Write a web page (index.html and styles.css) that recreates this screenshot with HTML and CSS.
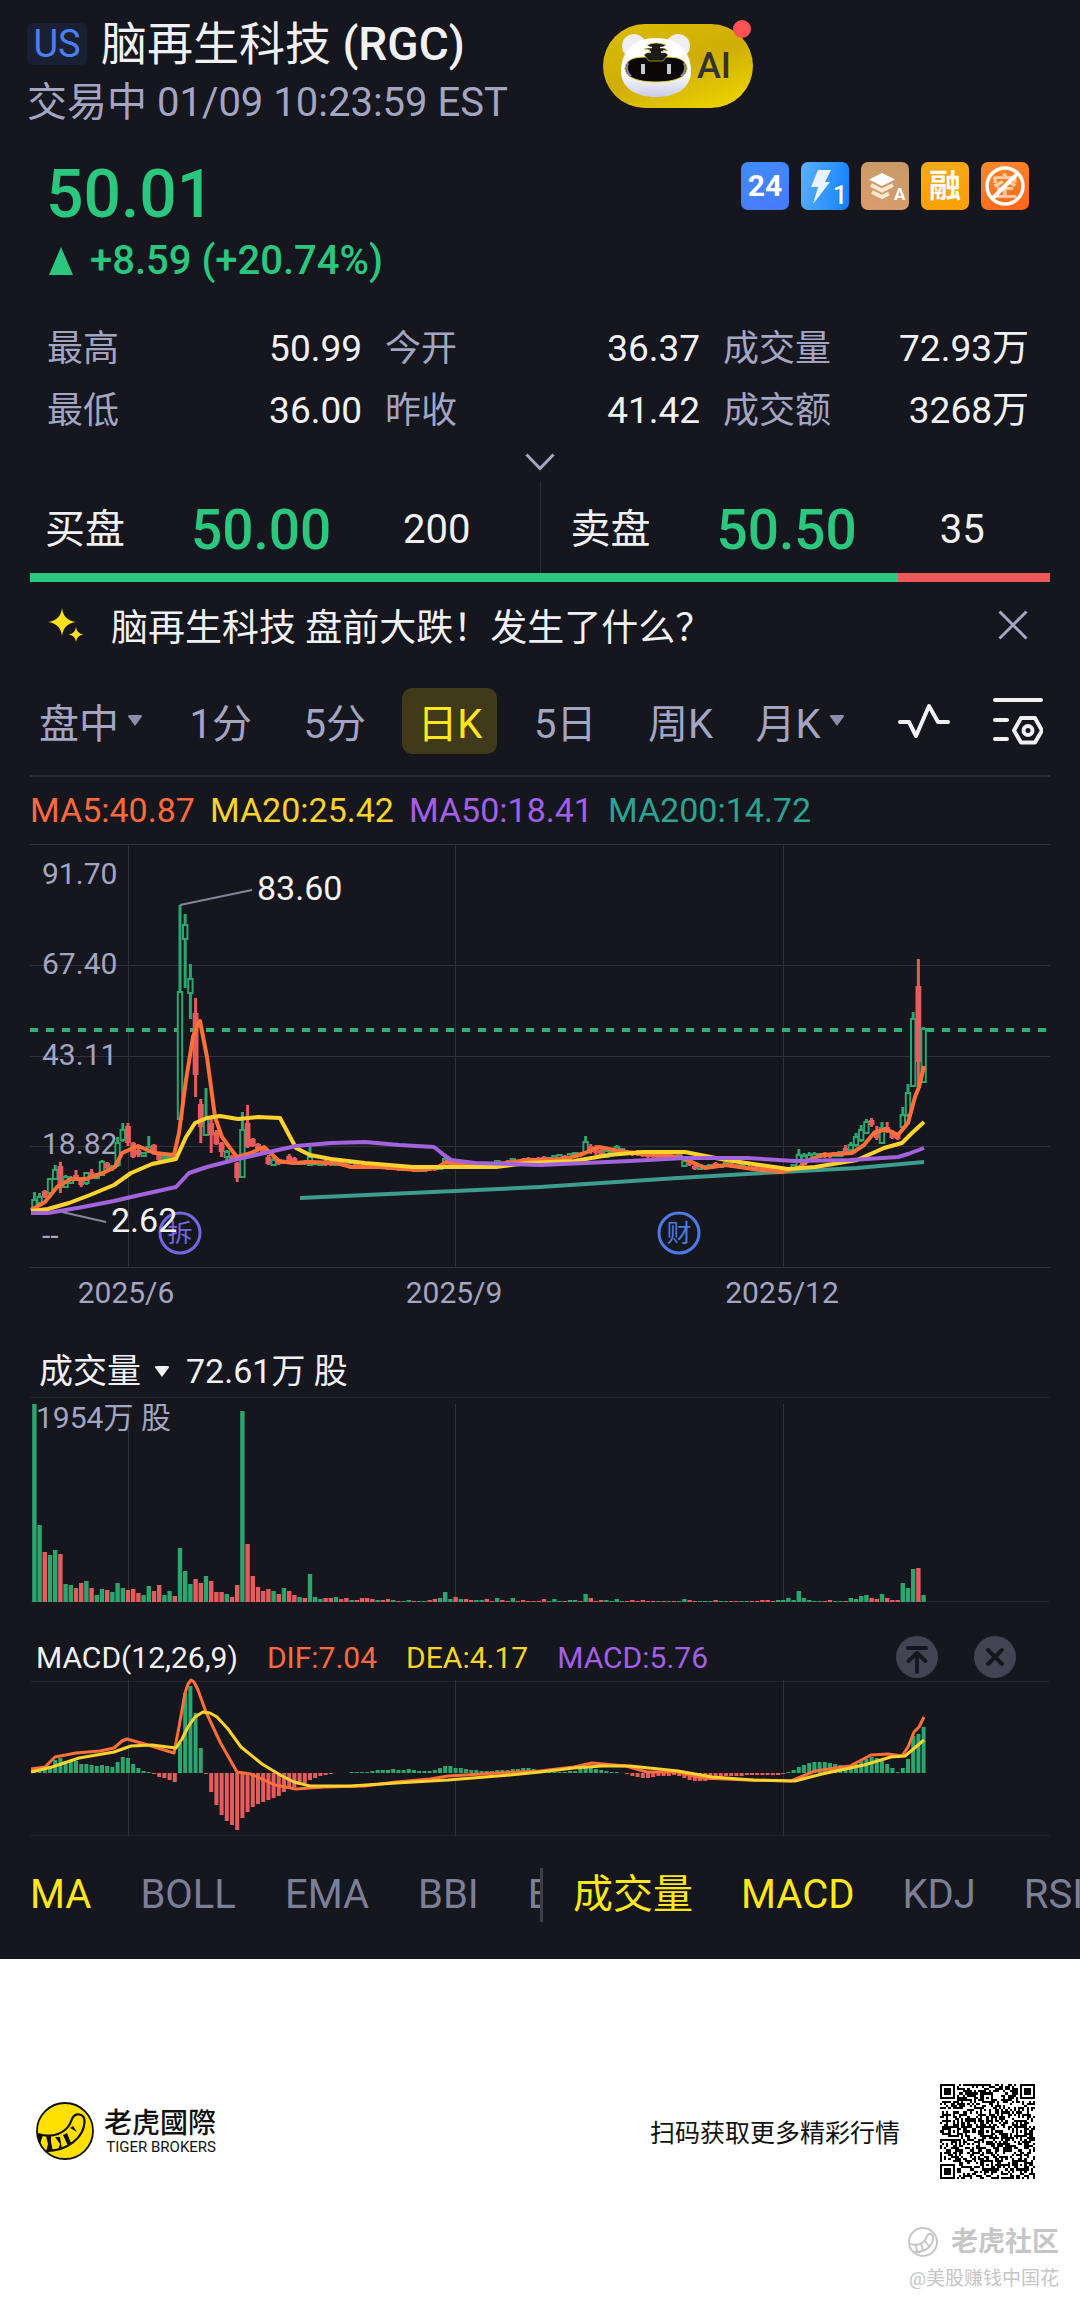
FILE: index.html
```html
<!DOCTYPE html>
<html lang="zh-CN">
<head>
<meta charset="utf-8">
<meta name="viewport" content="width=device-width, initial-scale=1">
<title>脑再生科技 (RGC)</title>
<link rel="stylesheet" href="styles.css">
</head>
<body>
<main class="panel">
  <header class="head">
    <div class="head-info">
      <h1 class="title"><span class="market">US</span><span class="name">脑再生科技 <span class="ticker">(RGC)</span></span></h1>
      <p class="status">交易中 01/09 10:23:59 EST</p>
    </div>
    <button class="ai" type="button">
      <svg class="ai-face" viewBox="0 0 78 66" aria-hidden="true">
        <defs>
          <linearGradient id="head" x1="0" y1="0" x2="0" y2="1"><stop offset="0.6" stop-color="#fff"/><stop offset="1" stop-color="#c9cbe6"/></linearGradient>
        </defs>
        <circle cx="17" cy="13" r="12" fill="#eeeef6"/><circle cx="61" cy="13" r="12" fill="#eeeef6"/>
        <path d="M39 5C60 5 74 18 74 38C74 56 58 64 39 64C20 64 4 56 4 38C4 18 18 5 39 5Z" fill="url(#head)"/>
        <path d="M8 35C9 27 16 24 28 24L50 24C62 24 69 27 70 35C70 45 56 49 39 49C22 49 8 45 8 35Z" fill="#0b0706" stroke="#e6d93c" stroke-width="1"/>
        <path d="M11 30C9 35 10 40 14 43M67 30C69 35 68 40 64 43" stroke="#8c86a0" stroke-width="2" fill="none"/>
        <path d="M27 22L32 28H46L51 22L46 17L51 18L46 14L49 12Q39 8 30 12L33 14L27 16L33 17Z" fill="#1d1a18" stroke="#e6d93c" stroke-width=".6"/>
        <path d="M27 19H34M44 19H51M29 14.500H35M43 14.500H49" stroke="#fff" stroke-width="1.500"/>
        <path d="M24 31h4v10h-4zM50 31h4v10h-4z" fill="#c9c9d2"/>
      </svg>
      <span>AI</span>
      <span class="ai-dot"></span>
    </button>
  </header>

  <section class="quote">
    <div>
      <p class="price">50.01</p>
      <p class="change"><svg viewBox="0 0 24 28" class="up" aria-hidden="true"><path d="M12 0L24 28H0Z"/></svg>+8.59 (+20.74%)</p>
    </div>
    <ul class="badges">
      <li class="badge b-24">24</li>
      <li class="badge b-bolt"><svg viewBox="0 0 48 48"><path d="M17 8H30L24 20H29L12 42L17 25H10Z" fill="#eaf4ff"/><text x="32" y="42" class="badge-mini">1</text></svg></li>
      <li class="badge b-layer"><svg viewBox="0 0 48 48"><path d="M21 11L34 17.500L21 24L8 17.500Z" fill="#fff"/><path d="M10 23L21 28.500L32 23M11 30L21 35L28 31.500" fill="none" stroke="#fbe7d3" stroke-width="4"/><text x="33" y="38" class="badge-a">A</text></svg></li>
      <li class="badge b-fin">融</li>
      <li class="badge b-no"><svg viewBox="0 0 48 48"><text x="11" y="34" class="badge-k">空</text><circle cx="24" cy="24" r="18" fill="none" stroke="#fff" stroke-width="3.500"/><path d="M12 36L36 12" stroke="#fff" stroke-width="4"/></svg></li>
    </ul>
  </section>

  <dl class="stats">
    <div><dt>最高</dt><dd>50.99</dd></div>
    <div><dt>今开</dt><dd>36.37</dd></div>
    <div><dt>成交量</dt><dd>72.93万</dd></div>
    <div><dt>最低</dt><dd>36.00</dd></div>
    <div><dt>昨收</dt><dd>41.42</dd></div>
    <div><dt>成交额</dt><dd>3268万</dd></div>
  </dl>
  <button class="more" type="button" aria-label="展开"><svg viewBox="0 0 30 18"><path d="M1.500 1.500L15 15.500L28.500 1.500"/></svg></button>

  <section class="depth">
    <div class="side"><span>买盘</span><b>50.00</b><span class="qty">200</span></div>
    <div class="side"><span>卖盘</span><b>50.50</b><span class="qty">35</span></div>
  </section>
  <div class="ratio"><span style="width:85.1%"></span></div>

  <section class="notice">
    <svg class="spark" viewBox="0 0 36 34" aria-hidden="true"><path d="M14 0Q15.500 12.500 28 14Q15.500 15.500 14 28Q12.500 15.500 0 14Q12.500 12.500 14 0Z"/><path d="M28 19Q28.800 25.700 35.500 26.500Q28.800 27.300 28 34Q27.200 27.300 20.500 26.500Q27.200 25.700 28 19Z"/></svg>
    <p>脑再生科技 盘前大跌！发生了什么？</p>
    <button class="close" type="button" aria-label="关闭"><svg viewBox="0 0 30 30"><path d="M1.500 1.500L28.500 28.500M28.500 1.500L1.500 28.500"/></svg></button>
  </section>

  <nav class="periods">
    <div class="period-list">
      <button type="button" class="drop">盘中<i class="caret"></i></button>
      <button type="button">1分</button>
      <button type="button">5分</button>
      <button type="button" class="on">日K</button>
      <button type="button">5日</button>
      <button type="button">周K</button>
      <button type="button" class="drop">月K<i class="caret"></i></button>
    </div>
    <button type="button" class="tool" aria-label="画线"><svg width="52" height="48" viewBox="0 0 52 48"><path d="M2 25H11L18 39L31 9L40 25H50" fill="none" stroke="#f1f1f4" stroke-width="4" stroke-linecap="round" stroke-linejoin="round"/></svg></button>
    <button type="button" class="tool" aria-label="设置"><svg width="50" height="48" viewBox="0 0 50 48" fill="none" stroke="#f1f1f4" stroke-width="4" stroke-linecap="round"><path d="M2 3H48M2 23H14M2 42H14"/><path d="M28 21H42L49 33.500L42 45.500H28L21 33.500Z" stroke-linejoin="round" stroke-width="4"/><circle cx="35" cy="33.500" r="4.500"/></svg></button>
  </nav>

  <p class="ma-line"><span class="c-orange">MA5:40.87</span><span class="c-yellow">MA20:25.42</span><span class="c-purple">MA50:18.41</span><span class="c-teal">MA200:14.72</span></p>

  <svg class="chart" viewBox="0 0 1020 476" role="img" aria-label="日K线图">
    <path class="grid" d="M0 .5H1020M0 121.500H1020M0 212.500H1020M0 302.500H1020M0 423.500H1020M98.500 0V423M425.500 0V423M753.500 0V423"/>
    <g class="axis">
      <text x="12" y="40">91.70</text><text x="12" y="130">67.40</text><text x="12" y="221">43.11</text><text x="12" y="310">18.82</text><text x="12" y="402">--</text>
      <text x="96" y="459" text-anchor="middle">2025/6</text><text x="424" y="459" text-anchor="middle">2025/9</text><text x="752" y="459" text-anchor="middle">2025/12</text>
    </g>
    <path class="now" d="M0 186H1020"/>
    <g id="candles"></g>
    <g class="lines bold">
      <polyline class="s-teal" points="270,354 425,347 510,343 648,334 751,328 827,324 894,318"/>
      <polyline class="s-orange" points="1,366 15,358 27,343 41,335 56,335 73,329 85,323 92,309 108,302 125,309 144,311 149,289 156,236 163,193 167,182 170,177 177,213 185,273 192,293 200,304 207,313 221,309 234,303 249,317 263,319 280,318 307,319 321,323 349,323 388,326 407,324 416,318 445,322 476,319 497,316 517,316 538,314 555,309 569,303 589,307 613,310 651,313 662,318 675,324 696,321 723,325 751,328 768,324 779,316 792,311 822,309 834,301 844,289 856,285 868,291 878,279 885,253 889,243 894,222"/>
      <polyline class="s-yellow" points="1,367 18,365 39,359 60,351 84,341 101,329 122,320 146,315 156,293 165,279 177,274 190,272 208,275 228,273 250,274 258,289 266,304 280,311 301,315 335,319 383,323 418,323 466,323 497,319 544,317 579,311 613,308 655,308 696,316 730,321 758,325 785,323 827,316 854,304 872,299 882,289 894,278"/>
      <polyline class="s-purple" points="1,369 18,369 53,363 84,357 101,353 146,343 159,329 177,323 208,315 239,308 266,302 301,299 335,298 369,301 404,303 414,311 421,316 445,319 480,320 510,321 555,319 600,317 655,314 717,314 765,317 820,316 868,313 878,310 894,304"/>
    </g>
    <path class="leader" d="M150 61L222 46M32 368L76 378"/>
    <circle cx="150" cy="389" r="20" class="mark m-split"/><text x="150" y="398" class="mark-t t-split">拆</text>
    <circle cx="649" cy="389" r="20" class="mark m-fin"/><text x="649" y="398" class="mark-t t-fin">财</text>
    <text x="227" y="56" class="extreme">83.60</text><text x="81" y="388" class="extreme">2.62</text>
  </svg>

  <div class="vol-head"><button type="button">成交量<i class="caret"></i></button><span>72.61万 股</span></div>
  <svg class="chart" viewBox="0 0 1020 206" role="img" aria-label="成交量图">
    <path class="grid faint" d="M0 .5H1020M0 204.500H1020"/>
    <path class="grid" d="M98.500 7V205M425.500 7V205M753.500 7V205"/>
    <g id="volume"></g>
    <text x="6" y="31" class="vol-max">1954万 股</text>
  </svg>

  <div class="macd-head">
    <span>MACD(12,26,9)</span><span class="c-orange">DIF:7.04</span><span class="c-yellow">DEA:4.17</span><span class="c-purple">MACD:5.76</span>
    <button type="button" class="round first" aria-label="置顶"><svg viewBox="0 0 42 42"><path d="M12 12H30M21 36V18M12.500 25L21 17L29.500 25"/></svg></button>
    <button type="button" class="round" aria-label="移除"><svg viewBox="0 0 42 42"><path d="M14 14L28 28M28 14L14 28"/></svg></button>
  </div>
  <svg class="chart" viewBox="0 0 1020 158" role="img" aria-label="MACD图">
    <path class="grid faint" d="M0 2.500H1020M0 156.500H1020"/>
    <path class="grid" d="M98.500 1V157M425.500 1V157M753.500 1V157"/>
    <g id="macd"></g>
    <g class="lines">
      <polyline class="s-orange" points="1,90 15,88 25,78 46,74 70,72 84,69 92,62 97,60 118,66 144,74 149,48 155,14 158,5 161,1 164,3 168,11 176,33 190,63 207,93 221,95 245,106 266,110 294,108 335,107 366,103 400,100 418,97 469,94 510,92 544,88 562,84 596,87 617,93 648,93 672,99 717,101 761,102 785,92 820,87 841,76 858,75 872,77 878,68 884,53 889,48 894,38"/>
      <polyline class="s-yellow" points="1,93 22,88 49,79 84,73 101,67 122,66 146,69 152,60 158,48 165,38 173,33 180,34 187,38 198,50 211,68 232,85 252,97 264,103 280,107 321,107 366,104 418,101 480,96 510,93 544,89 572,87 600,87 648,92 682,98 723,101 765,102 792,95 834,86 861,78 875,77 894,61"/>
    </g>
  </svg>

  <nav class="indicators">
    <div class="ind-main"><button type="button" class="on">MA</button><button type="button">BOLL</button><button type="button">EMA</button><button type="button">BBI</button><button type="button">E</button></div>
    <div class="ind-sub"><button type="button" class="on">成交量</button><button type="button" class="on">MACD</button><button type="button">KDJ</button><button type="button">RSI</button></div>
  </nav>
</main>

<footer class="foot">
  <div class="brand-row">
    <svg class="logo" viewBox="0 0 58 58" aria-hidden="true">
      <circle cx="29" cy="29" r="28" fill="#ffe000" stroke="#111" stroke-width="1.800"/>
      <path d="M2 32C15 36 31 33 36 17C39 10 49 11 48.500 20C48 35 32 49 10 49" fill="none" stroke="#111" stroke-width="2.200"/>
      <path d="M1 31L7 33L4 42ZM10 34L15 34L15 40L17 49L10 50L12 42ZM19 35L24 35L26 47L22 48L24 42ZM27 33L31 31L35 41L32 44ZM34 26L37 24L41 30Z" fill="#111"/>
    </svg>
    <div class="brand"><strong>老虎國際</strong><span>TIGER BROKERS</span></div>
    <p class="scan">扫码获取更多精彩行情</p>
    <svg class="qr" viewBox="0 0 45 45" shape-rendering="crispEdges" role="img" aria-label="二维码"><path id="qr"/></svg>
  </div>
  <div class="credit">
    <p class="community"><svg viewBox="0 0 30 30" aria-hidden="true"><circle cx="15" cy="15" r="14"/><path d="M2 17C11 19 17 16 19 9C21 5 26 7 25 12C24 20 16 26 6 25M8 18L9 24M13 17L15 23M17 14L21 19"/></svg>老虎社区</p>
    <p class="author">@美股赚钱中国花</p>
  </div>
</footer>
<script src="charts.js"></script>
</body>
</html>
```
FILE: styles.css
```css
* { box-sizing: border-box; }
body, h1, p, ul, dl, dd { margin: 0; padding: 0; }
body { font-family: Roboto, "Noto Sans CJK SC", sans-serif; background: #fff; color: #f1f1f4; }
button { font: inherit; color: inherit; background: none; border: 0; padding: 0; margin: 0; cursor: pointer; white-space: nowrap; }
svg { display: block; }

.panel { background: #15161e; overflow: hidden; padding-bottom: 8px; }

.head { display: grid; grid-template-columns: 5fr 4fr; padding-top: 16px; }
.head-info { padding-left: 27px; white-space: nowrap; }
.title { display: flex; align-items: center; gap: 14px; height: 56px; font-size: 46px; font-weight: 400; line-height: 56px; }
.ticker { font-weight: 500; }
.market { width: 60px; border-radius: 6px; background: #1a2033; color: #4b7ef0; font-size: 38px; line-height: 42px; text-align: center; }
.status { margin-top: 3px; font-size: 40px; line-height: 56px; color: #a3a5c3; }
.ai { position: relative; display: flex; align-items: center; gap: 2px; width: 150px; height: 84px; margin: 8px 0 0 3px; padding-left: 14px; border-radius: 42px; background: linear-gradient(160deg, #d9bd00, #cfae08 50%, #ead000 90%); color: #333; font-size: 36px; font-weight: 500; }
.ai-face { width: 78px; height: 66px; flex: none; }
.ai-dot { position: absolute; top: -4px; right: 2px; width: 18px; height: 18px; border-radius: 50%; background: #ff5252; }

.quote { display: flex; justify-content: space-between; align-items: flex-start; padding: 28px 51px 0 46px; color: #2bc77f; }
.price { font-size: 66px; line-height: 72px; font-weight: 500; }
.change { display: flex; align-items: center; gap: 17px; margin-top: 2px; padding-left: 3px; font-size: 40px; line-height: 56px; font-weight: 500; }
.up { width: 24px; height: 28px; fill: #2bc77f; }
.badges { display: flex; gap: 12px; margin-top: 3px; list-style: none; }
.badge { width: 48px; height: 48px; border-radius: 7px; color: #fff; text-align: center; font-size: 32px; font-weight: 700; line-height: 48px; overflow: hidden; }
.b-24 { background: linear-gradient(160deg, #3f8df8, #4a78fb); font-size: 30px; }
.b-bolt { background: linear-gradient(100deg, #5db0fb, #1180fb); }
.b-layer { background: linear-gradient(200deg, #c69a68, #dc9c6c); }
.b-fin { background: linear-gradient(160deg, #f3ab1d, #fb9e05); }
.b-no { background: linear-gradient(160deg, #f98a2c, #ff6418); }
.badge-mini { font-size: 25px; font-weight: 500; fill: #fff; }
.badge-a { font-size: 17px; font-weight: 700; fill: #fff; }
.badge-k { font-size: 26px; font-weight: 700; fill: #ffd0a4; }

.stats { display: grid; grid-template-columns: 103fr 103fr 100fr; column-gap: 23px; padding: 0 51px 0 47px; margin-top: 29px; font-size: 37px; line-height: 62px; }
.stats div { display: flex; justify-content: space-between; }
.stats dt { color: #a3a5c3; font-size: 36px; }
.more { display: flex; width: 100%; height: 39px; align-items: center; justify-content: center; }
.more svg { width: 30px; height: 18px; fill: none; stroke: #a3a5c3; stroke-width: 3; }

.depth { display: grid; grid-template-columns: 1fr 1fr; gap: 16px; padding: 6px 0 0 45px; background: linear-gradient(#2a2c36, #2a2c36) center / 1px 100% no-repeat; font-size: 40px; line-height: 86px; }
.side { display: grid; grid-template-columns: 146px 136px 1fr; padding-right: 8px; }
.side b { font-size: 55px; font-weight: 500; color: #2bc77f; }
.qty { text-align: center; }
.ratio { height: 9px; margin: 0 30px; background: #ee5856; }
.ratio span { display: block; height: 100%; background: #2bc77f; }

.notice { display: flex; align-items: center; height: 86px; padding: 0 52px 0 48px; font-size: 37px; white-space: nowrap; }
.spark { width: 36px; height: 34px; fill: #ffe01b; }
.notice p { flex: 1; margin-left: 27px; }
.close svg { width: 30px; height: 30px; fill: none; stroke: #a3a5c3; stroke-width: 3; }

.periods { display: flex; align-items: center; justify-content: space-between; height: 109px; margin: 0 30px; padding: 0 7px 2px 0; border-bottom: 2px solid #2c2d34; color: #a3a5c3; font-size: 40px; }
.period-list { display: flex; justify-content: space-between; flex: 0 0 836px; max-width: 82%; margin-left: -6px; }
.period-list button { display: flex; align-items: center; height: 66px; padding: 0 15px; border-radius: 10px; }
.period-list .drop { padding-right: 10px; }
.period-list .drop:last-child { padding-left: 6px; }
.period-list .on { background: #403a1b; color: #ffe71c; }
.caret { border: 8px solid transparent; border-top: 11px solid currentColor; border-bottom: 0; border-radius: 3px; margin-left: 8px; opacity: .85; }

.ma-line { display: flex; gap: 15px; padding: 0 30px; font-size: 34px; line-height: 67px; white-space: nowrap; }
.c-orange { color: #ff6a3c; }
.c-yellow { color: #f8d329; }
.c-purple { color: #a45fe8; }
.c-teal { color: #2da392; }

.chart { width: calc(100% - 60px); height: auto; margin: 0 30px; overflow: visible; }
.grid { stroke: #303139; fill: none; }
.faint { stroke: #22232b; }
.axis { font-size: 30px; fill: #a3a5c3; }
.now { stroke: #2bb277; stroke-width: 4; stroke-dasharray: 8 8; }
.lines { fill: none; stroke-width: 3; stroke-linejoin: round; }
.bold { stroke-width: 4; }
.s-orange { stroke: #ff6f3a; }
.s-yellow { stroke: #ffd22e; }
.s-purple { stroke: #a263dc; }
.s-teal { stroke: #3d9c8e; }
.leader { stroke: #85869a; stroke-width: 2; }
.extreme { font-size: 34px; fill: #f4f4f6; }
.mark { fill: none; stroke-width: 3; }
.m-split { stroke: #7566e4; }
.m-fin { stroke: #4b7be4; }
.mark-t { font-size: 25px; text-anchor: middle; }
.t-split { fill: #7566e4; }
.t-fin { fill: #4b7be4; }
.vol-max { font-size: 30px; fill: #a3a5c3; }
.rise { fill: #2ba66f; }
.fall { fill: #e65c5c; }
.rise-line { fill: #15161e; stroke: #2ba66f; stroke-width: 2; }
.rise-wick { stroke: #2ba66f; stroke-width: 3; }
.fall-wick { stroke: #e65c5c; stroke-width: 3; }

.vol-head { display: flex; gap: 16px; margin-top: 25px; padding-left: 39px; font-size: 34px; line-height: 52px; }
.vol-head button { display: flex; align-items: center; }
.vol-head .caret { margin-left: 13px; opacity: 1; }

.macd-head { display: flex; align-items: center; gap: 29px; height: 44px; margin-top: 32px; padding: 0 64px 0 36px; font-size: 30px; white-space: nowrap; }
.round { width: 42px; height: 42px; border-radius: 50%; background: #424454; }
.round.first { margin: 0 7px 0 auto; }
.round svg { fill: none; stroke: #15161e; stroke-width: 4; stroke-linecap: round; stroke-linejoin: round; }

.indicators { display: grid; grid-template-columns: 1fr 1fr; align-items: center; height: 114px; padding-top: 2px; font-size: 40px; color: #7d7f97; }
.ind-main, .ind-sub { display: flex; gap: 49px; overflow: hidden; line-height: 54px; }
.ind-main { padding-left: 30px; border-right: 3px solid #3c3d45; margin-right: -3px; }
.ind-sub { padding-left: 33px; gap: 48px; }
.indicators .on { color: #ffe71c; }

.foot { color: #111; padding: 124px 21px 0 36px; }
.brand-row { display: flex; align-items: center; height: 96px; padding-right: 24px; white-space: nowrap; }
.logo { width: 58px; height: 58px; }
.brand { display: flex; flex-direction: column; align-items: flex-end; margin-left: 10px; }
.brand strong { font-size: 28px; line-height: 32px; font-weight: 500; font-family: "Noto Sans CJK TC", sans-serif; }
.brand span { font-size: 15px; line-height: 20px; }
.scan { margin-left: auto; font-size: 25px; }
.qr { width: 95px; height: 95px; margin-left: 40px; }
.credit { display: flex; flex-direction: column; align-items: flex-end; padding: 42px 0 12px; color: #c6c6c6; }
.community { display: flex; align-items: center; gap: 13px; font-size: 27px; line-height: 42px; font-weight: 700; }
.community svg { width: 30px; height: 30px; fill: none; stroke: #c6c6c6; stroke-width: 2; }
.author { font-size: 19px; line-height: 32px; }
```
FILE: charts.js
```js
const NS = "http://www.w3.org/2000/svg";
const STEP = 5.2;
const barX = i => 4.4 + STEP * i;

function add(parent, tag, attrs) {
  const el = document.createElementNS(NS, tag);
  for (const key in attrs) el.setAttribute(key, attrs[key]);
  parent.appendChild(el);
}

// Direction of each trading day: g = rise, r = fall
const DIR = "ggrggrggrrgrggrgggrrrggrrggrggg".padEnd(172, "r").split("");
[[28, "ggg"], [31, "rrgrrrgrrgrrrrrgrgrrgrg"], [54, "ggrrgrrgrrrrgrrgrggrggrrggg"], [81, "rgrrggrrgrrgrrrrr"], [98, "rgggrggrgg"],
 [106, "grrrggggrrrrrrgrgrggrrgggrggrrgg"], [138, "rrrrrgggggggggrrggrgg"], [157, "ggggrrgrrrgggrg"]]
  .forEach(([at, run]) => run.split("").forEach((d, k) => { DIR[at + k] = d; }));

// Candles: high, body top, body bottom, low
const CANDLES = {
  0:[348,356,365,366],1:[349,353,359,361],2:[346,347,353,354],3:[335,335,349,349],4:[321,326,335,336],5:[318,322,344,349],
  6:[331,333,343,344],7:[332,334,339,340],8:[326,331,336,337],9:[334,335,341,343],10:[328,329,339,341],11:[325,328,333,334],
  12:[329,331,334,335],13:[316,318,331,332],14:[318,319,324,326],15:[321,322,324,327],16:[293,299,321,323],17:[279,286,296,298],
  18:[279,282,299,302],19:[298,299,313,314],20:[304,306,311,313],21:[308,309,312,313],22:[292,303,308,309],23:[300,301,310,311],
  24:[309,310,316,318],25:[311,313,315,316],26:[311,312,314,315],27:[309,311,314,316],28:[61,148,275,276],29:[70,81,95,144],
  30:[120,135,149,175],31:[154,169,231,253],32:[255,260,283,299],33:[244,274,291,292],34:[273,279,291,309],35:[286,288,300,301],
  36:[298,299,308,313],37:[306,308,313,317],38:[311,312,316,318],39:[318,319,334,338],40:[268,286,333,333],41:[261,279,303,304],
  42:[294,295,302,303],43:[299,300,305,306],44:[302,303,309,310],45:[311,313,320,321],46:[314,316,321,322],47:[315,316,320,321],
  48:[316,317,319,320],49:[310,312,318,319],50:[313,314,319,320],53:[303,313,321,322],
  79:[312,315,322,323],106:[292,298,308,309],107:[300,302,308,310],108:[301,303,309,311],109:[304,306,313,314],110:[304,307,313,314],
  112:[301,303,309,310],125:[316,317,322,322],147:[305,311,324,325],148:[309,312,320,321],149:[308,311,316,317],150:[308,310,316,317],
  156:[301,304,309,310],157:[298,301,306,308],158:[289,293,301,303],159:[281,286,296,298],160:[275,278,289,290],161:[274,276,281,283],
  162:[282,286,294,296],163:[278,284,299,299],164:[278,283,288,289],165:[286,289,294,295],166:[289,290,295,296],167:[263,271,283,284],
  168:[240,249,271,273],169:[168,175,242,242],170:[115,142,218,243],171:[183,185,238,238]
};
// Trend of the quiet stretch, [day, y]
const TREND = [[51,318],[58,319],[66,322],[74,325],[78,323],[82,320],[87,321],[92,317],[98,315],[103,311],[113,307],[118,311],[124,312],
  [127,323],[133,320],[140,324],[145,325],[151,311],[156,310]];
function trend(i) {
  for (let k = 1; k < TREND.length; k++) {
    const [a, ya] = TREND[k - 1], [b, yb] = TREND[k];
    if (i <= b) return ya + (yb - ya) * (i - a) / (b - a);
  }
  return TREND[TREND.length - 1][1];
}
const candles = document.getElementById("candles");
for (let i = 0; i < 172; i++) {
  const base = Math.round(trend(i)), s = (i * 7) % 3;
  const [hi, top, bot, lo] = CANDLES[i] || [base - 1 - s, base - s, base + 2, base + 3];
  const x = barX(i), up = DIR[i] === "g";
  add(candles, "path", { class: up ? "rise-wick" : "fall-wick", d: `M${x} ${hi}V${lo}` });
  add(candles, "rect", up
    ? { class: "rise-line", x: x - 2.2, y: top, width: 4.4, height: Math.max(bot - top, 1) }
    : { class: "fall", x: x - 2.9, y: top, width: 5.8, height: bot - top });
}

const VOLUME = [198,77,50,47,52,48,18,17,14,19,21,14,7,13,12,10,19,14,12,13,9,7,16,11,17,7,11,6,54,31,18,23,19,26,21,10,10,8,5,17,
  191,58,26,15,11,13,11,8,14,11,7,5,4,28,5,3,4,4,5,3,4,2,2,4,4,3,2,2,3,2,1,1,2,1,1,1,2,3,4,10,3,5,3,3,2,2,2,3,1,4,2,1,4,1,2,1,1,1,
  3,1,3,1,1,2,2,1,8,4,1,2,2,1,3,1,1,2,1,2,1,1,1,1,1,1,1,3,2,1,1,1,1,2,1,1,1,1,1,1,1,1,2,2,1,2,2,4,2,11,4,2,1,1,1,2,1,1,1,4,3,6,7,4,3,8,4,2,2,19,14,33,34,7];
const volume = document.getElementById("volume");
VOLUME.forEach((v, i) => add(volume, "rect", {
  class: DIR[i] === "g" ? "rise" : "fall", x: barX(i) - 2.2, y: 205 - v, width: 4.4, height: v
}));

const MACD = [1,2,4,7,13,15,12,12,12,9,9,8,7,8,7,6,11,16,15,9,5,2,1,-1,-4,-5,-7,-9,30,80,87,60,25,-1,-19,-32,-42,-48,-52,-57,-45,-39,
  -34,-31,-29,-27,-25,-23,-19,-16,-14,-12,-10,-7,-5,-3,-2,-1,0,0,0,1,1,1,1,2,3,3,3,4,3,3,4,3,2,2,2,3,5,7,7,5,5,4,3,3,2,2,2,3,3,3,4,4,
  5,5,4,1,1,1,1,1,1,2,2,4,5,5,4,3,2,1,1,0,-1,-3,-4,-5,-5,-4,-3,-3,-3,-2,-3,-5,-7,-8,-8,-8,-7,-5,-4,-3,-3,-3,-3,-2,-2,-2,-2,-2,-2,-2,
  -1,1,3,6,8,10,11,11,11,10,9,8,7,8,9,12,14,16,15,12,9,5,1,5,14,37,39,46];
const macd = document.getElementById("macd");
MACD.forEach((v, i) => {
  if (v) add(macd, "rect", {
    class: v > 0 ? "rise" : "fall", x: barX(i) - 2, y: v > 0 ? 94 - v : 94, width: 4, height: Math.abs(v)
  });
});

// 45 x 45 code: three finders, six alignment marks and the data modules
const N = 45, marks = [[6, 22], [22, 6], [22, 22], [22, 38], [38, 22], [38, 38]];
let seed = 7391, d = "";
for (let y = 0; y < N; y++) for (let x = 0; x < N; x++) {
  seed = (seed * 1103515245 + 12345) % 2147483648;
  let on = (seed >> 16) % 2 === 0;
  for (const [fx, fy] of [[0, 0], [38, 0], [0, 38]]) {
    const r = Math.max(Math.abs(x - fx - 3), Math.abs(y - fy - 3));
    if (r <= 4) on = r <= 1 || r === 3;
  }
  for (const [mx, my] of marks) {
    const r = Math.max(Math.abs(x - mx), Math.abs(y - my));
    if (r <= 2) on = r !== 1;
  }
  if (on) d += `M${x} ${y}h1v1h-1z`;
}
document.getElementById("qr").setAttribute("d", d);
```
